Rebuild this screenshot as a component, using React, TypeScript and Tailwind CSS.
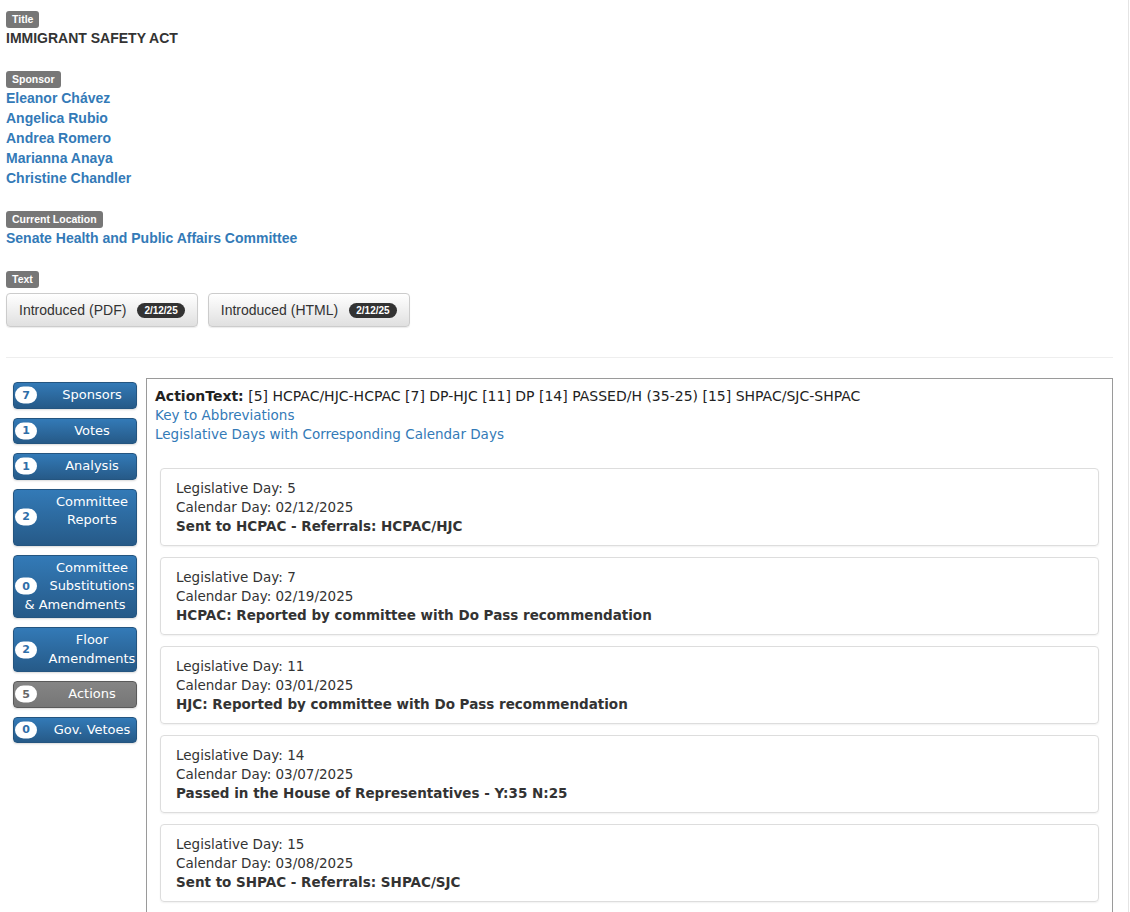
import React from "react";

const helv = { fontFamily: '"Liberation Sans", Arial, Helvetica, sans-serif' };
const verd = { fontFamily: '"DejaVu Sans", Verdana, sans-serif' };

function Label({ children }: { children: React.ReactNode }) {
  return (
    <div className="flex">
      <span className="inline-block h-[17px] rounded-[3px] bg-[#777777] px-[6px] text-[10.5px] font-bold leading-[17px] text-white">
        {children}
      </span>
    </div>
  );
}

function DocButton({ text, date }: { text: string; date: string }) {
  return (
    <button className="flex h-[34px] items-center rounded-[4px] border border-[#cccccc] bg-gradient-to-b from-white to-[#e0e0e0] px-[12px] text-[14px] text-[#333333] shadow-[inset_0_1px_0_rgba(255,255,255,0.15),0_1px_1px_rgba(0,0,0,0.08)]">
      <span>{text}</span>
      <span className="ml-[11px] rounded-full bg-[#333333] px-[7px] text-[10px] font-bold leading-[15px] text-white">
        {date}
      </span>
    </button>
  );
}

type Side = { n: string; lines: string[]; tail?: string; active?: boolean; extra?: boolean };

const sideItems: Side[] = [
  { n: "7", lines: ["Sponsors"] },
  { n: "1", lines: ["Votes"] },
  { n: "1", lines: ["Analysis"] },
  { n: "2", lines: ["Committee", "Reports"], extra: true },
  { n: "0", lines: ["Committee", "Substitutions"], tail: "& Amendments" },
  { n: "2", lines: ["Floor", "Amendments"] },
  { n: "5", lines: ["Actions"], active: true },
  { n: "0", lines: ["Gov. Vetoes"] },
];

function SideButton({ item }: { item: Side }) {
  const base = item.active
    ? "border-[#5a5a5a] bg-gradient-to-b from-[#858585] to-[#767676]"
    : "border-[#245580] bg-gradient-to-b from-[#337ab7] to-[#265a88]";
  return (
    <div
      className={`relative rounded-[4px] border ${base} pt-[3px] ${item.extra ? "pb-[15px]" : "pb-[3px]"} text-[13px] leading-[18.5px] text-white shadow-[0_1px_2px_rgba(0,0,0,0.15)]`}
    >
      <span
        className={`absolute left-[1px] top-1/2 flex h-[17px] w-[22px] -translate-y-1/2 items-center justify-center rounded-full bg-white text-[11px] font-bold ${item.active ? "text-[#666666]" : "text-[#2f6ea8]"}`}
      >
        {item.n}
      </span>
      <div className="pl-[34px] text-center">
        {item.lines.map((l) => (
          <div key={l} className="whitespace-nowrap">
            {l}
          </div>
        ))}
      </div>
      {item.tail && <div className="whitespace-nowrap text-center">{item.tail}</div>}
    </div>
  );
}

const actions = [
  { ld: "5", cd: "02/12/2025", t: "Sent to HCPAC - Referrals: HCPAC/HJC" },
  { ld: "7", cd: "02/19/2025", t: "HCPAC: Reported by committee with Do Pass recommendation" },
  { ld: "11", cd: "03/01/2025", t: "HJC: Reported by committee with Do Pass recommendation" },
  { ld: "14", cd: "03/07/2025", t: "Passed in the House of Representatives - Y:35 N:25" },
  { ld: "15", cd: "03/08/2025", t: "Sent to SHPAC - Referrals: SHPAC/SJC" },
];

export default function App() {
  return (
    <div className="min-h-[912px] w-[1129px] border-r border-[#e4e4e4] bg-white" style={helv}>
      <div className="w-[1113px] pl-[6px] pt-[11px]">
        <div className="mb-[23px]">
          <Label>Title</Label>
          <div className="text-[14px] font-bold leading-[20px] text-[#333333]">IMMIGRANT SAFETY ACT</div>
        </div>
        <div className="mb-[23px]">
          <Label>Sponsor</Label>
          <div className="flex flex-col text-[14px] font-bold leading-[20px] text-[#337ab7]">
            <span>Eleanor Chávez</span>
            <span>Angelica Rubio</span>
            <span>Andrea Romero</span>
            <span>Marianna Anaya</span>
            <span>Christine Chandler</span>
          </div>
        </div>
        <div className="mb-[23px]">
          <Label>Current Location</Label>
          <div className="text-[14px] font-bold leading-[20px] text-[#337ab7]">
            Senate Health and Public Affairs Committee
          </div>
        </div>
        <div>
          <Label>Text</Label>
          <div className="mt-[5px] flex gap-[10px]">
            <DocButton text="Introduced (PDF)" date="2/12/25" />
            <DocButton text="Introduced (HTML)" date="2/12/25" />
          </div>
        </div>
        <div className="mt-[30px] border-t border-[#eeeeee]" />

        <div className="mt-[20px] flex" style={verd}>
          <div className="w-[140px] shrink-0 pl-[7px] pr-[9px] pt-[4px]">
            <div className="flex flex-col gap-[9px]">
              {sideItems.map((it, i) => (
                <SideButton key={i} item={it} />
              ))}
            </div>
          </div>
          <div className="min-h-[540px] flex-1 border border-b-0 border-[#9a9a9a] p-[8px] text-[13.5px] leading-[19px] text-[#222222]">
            <div className="text-[14px]">
              <span className="font-bold">ActionText:</span> [5] HCPAC/HJC-HCPAC [7] DP-HJC [11] DP [14]
              PASSED/H (35-25) [15] SHPAC/SJC-SHPAC
            </div>
            <div className="text-[#337ab7]">Key to Abbreviations</div>
            <div className="text-[#337ab7]">Legislative Days with Corresponding Calendar Days</div>
            <div className="mx-[5px] mt-[24px] flex flex-col gap-[11px]">
              {actions.map((a) => (
                <div
                  key={a.ld}
                  className="rounded-[4px] border border-[#dddddd] px-[15px] pb-[9px] pt-[10px] text-[#333333] shadow-[0_1px_2px_rgba(0,0,0,0.06)]"
                >
                  <div>Legislative Day: {a.ld}</div>
                  <div>Calendar Day: {a.cd}</div>
                  <div className="font-bold">{a.t}</div>
                </div>
              ))}
            </div>
          </div>
        </div>
      </div>
    </div>
  );
}
